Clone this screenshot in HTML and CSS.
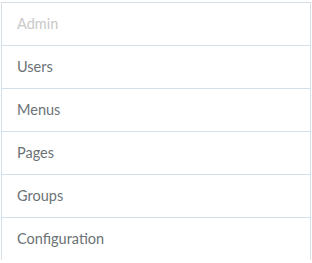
FILE: index.html
```html
<!DOCTYPE html>
<html lang="en">
<head>
  <meta charset="UTF-8">
  <meta name="viewport" content="width=device-width, initial-scale=1.0">
  <title>Admin</title>
  <link rel="stylesheet" href="styles.css">
</head>
<body>

  <!-- Admin menu -->
  <div class="list-group">
    <div class="list-group-item disabled">Admin</div>
    <a class="list-group-item" href="#">Users</a>
    <a class="list-group-item" href="#">Menus</a>
    <a class="list-group-item" href="#">Pages</a>
    <a class="list-group-item" href="#">Groups</a>
    <a class="list-group-item" href="#">Configuration</a>
  </div>

</body>
</html>
```

FILE: styles.css
```css
body {
  margin: 0;
  padding: 2px 1px 0 1px;
  font-family: Lato, "Open Sans", sans-serif;
  font-size: 14.5px;
  color: #636b6f;
  background: #fff;
}
.list-group {
  display: flex;
  flex-direction: column;
  width: 310px;
}
.list-group-item {
  display: block;
  padding: 10px 15px;
  line-height: 22px;
  margin-bottom: -1px;
  border: 1px solid #d3e0e9;
  background-color: #fff;
  color: #6b7276;
  text-decoration: none;
}
.list-group-item.disabled {
  color: #c8c8c8;
}
```
